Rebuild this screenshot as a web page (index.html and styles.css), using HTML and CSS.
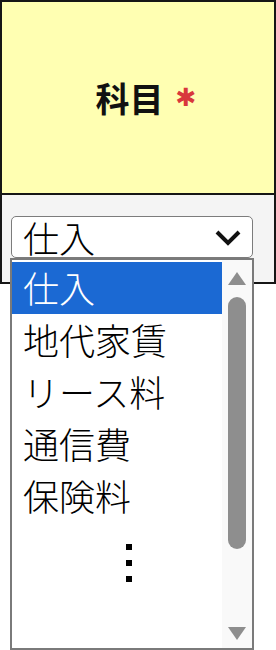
FILE: index.html
```html
<!DOCTYPE html>
<html lang="ja">
<head>
  <meta charset="UTF-8">
  <title>科目</title>
  <link rel="stylesheet" href="styles.css">
</head>
<body>

  <div class="field">
    <div class="field-label">
      <span class="label-text">科目</span>
      <span class="required">✱</span>
    </div>
    <div class="field-body">
      <div class="select">
        <span class="select-value">仕入</span>
        <svg class="chevron" width="28" height="18" viewBox="0 0 28 18">
          <path d="M3 3 L14 14 L25 3" fill="none" stroke="#111" stroke-width="4"/>
        </svg>
      </div>
    </div>
  </div>

  <div class="dropdown">
    <ul class="options">
      <li class="option selected">仕入</li>
      <li class="option">地代家賃</li>
      <li class="option">リース料</li>
      <li class="option">通信費</li>
      <li class="option">保険料</li>
      <li class="more">
        <span class="dot"></span>
        <span class="dot"></span>
        <span class="dot"></span>
      </li>
    </ul>
    <div class="scrollbar">
      <div class="arrow up"></div>
      <div class="thumb"></div>
      <div class="arrow down"></div>
    </div>
  </div>

</body>
</html>
```

FILE: styles.css
```css
body {
  margin: 0;
  padding: 0;
  font-family: 'Noto Sans CJK JP', 'Noto Sans', sans-serif;
  background: #ffffff;
}

.field {
  width: 276px;
  box-sizing: border-box;
  border: 2px solid #161616;
}

.field-label {
  height: 191px;
  background: #ffffb2;
  border-bottom: 2px solid #161616;
  display: flex;
  align-items: center;
  justify-content: center;
  padding-left: 16px;
  gap: 12px;
}

.label-text {
  font-size: 34px;
  font-weight: 700;
  color: #111;
  line-height: 1;
}

.required {
  font-family: 'DejaVu Sans', sans-serif;
  font-size: 25px;
  color: #d8383c;
  line-height: 1;
}

.field-body {
  height: 87px;
  background: #f4f4f4;
  padding: 21px 21px 0 9px;
  box-sizing: border-box;
}

.select {
  height: 42px;
  box-sizing: border-box;
  border: 1px solid #7c7c7c;
  border-radius: 5px;
  background: #ffffff;
  display: flex;
  align-items: center;
  justify-content: space-between;
  padding: 0 10px 0 11px;
}

.select-value {
  font-size: 36px;
  font-weight: 300;
  line-height: 1;
  color: #000;
}

.chevron {
  display: block;
  margin-top: 2px;
}

.dropdown {
  position: absolute;
  top: 258px;
  left: 10px;
  width: 244px;
  height: 392px;
  box-sizing: border-box;
  border: 2px solid #7a7a7a;
  background: #ffffff;
  display: flex;
}

.options {
  flex: 1;
  list-style: none;
  margin: 0;
  padding: 2px 0 0;
}

.option {
  height: 52px;
  display: flex;
  align-items: center;
  padding: 0 0 3px 11px;
  box-sizing: border-box;
  font-size: 36px;
  font-weight: 300;
  color: #000;
  line-height: 1;
}

.option.selected {
  background: #1b69d3;
  color: #ffffff;
}

.more {
  display: flex;
  flex-direction: column;
  gap: 10px;
  padding: 22px 0 0 114px;
}

.dot {
  width: 6px;
  height: 6px;
  background: #000;
}

.scrollbar {
  width: 30px;
  background: #f9f9f9;
  display: flex;
  flex-direction: column;
  align-items: center;
  padding: 12px 0 8px;
  box-sizing: border-box;
}

.arrow {
  width: 0;
  height: 0;
  border-left: 9px solid transparent;
  border-right: 9px solid transparent;
}

.arrow.up {
  border-bottom: 13px solid #8e8e8e;
}

.arrow.down {
  border-top: 13px solid #8e8e8e;
  margin-top: auto;
}

.thumb {
  width: 18px;
  height: 252px;
  margin-top: 12px;
  border-radius: 9px;
  background: #8e8e8e;
}
```
